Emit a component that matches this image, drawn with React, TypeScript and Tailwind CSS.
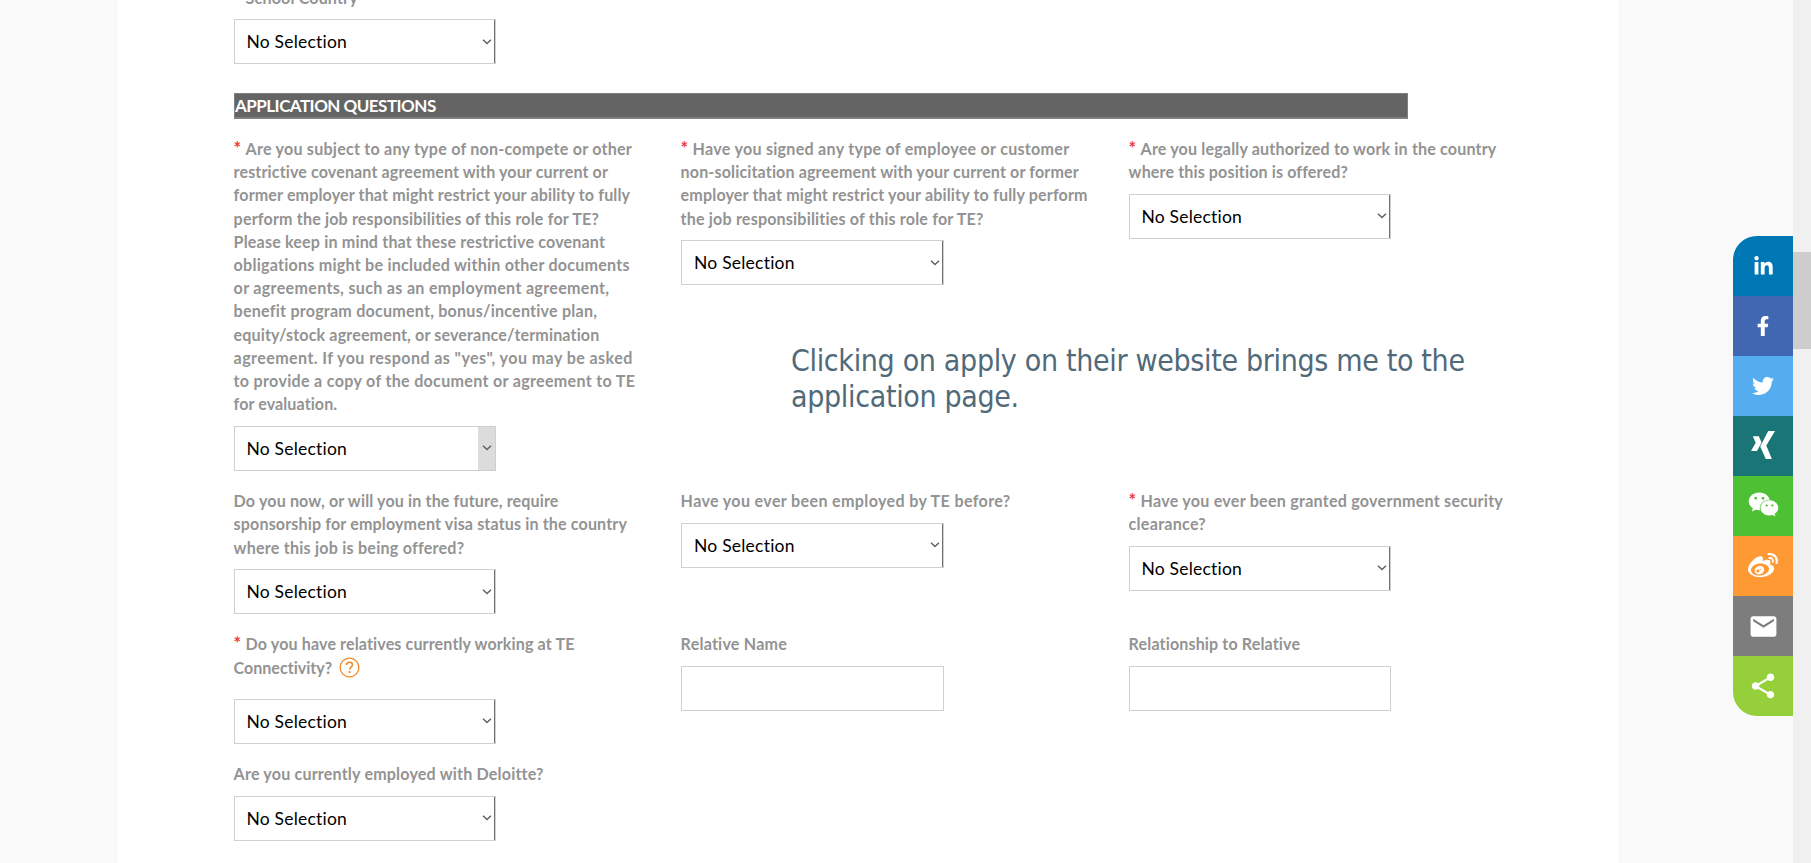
import React from 'react';
import { FaFacebookF, FaLinkedinIn, FaTwitter, FaWeibo, FaWeixin } from 'react-icons/fa';
import { MdEmail, MdShare } from 'react-icons/md';

type Line = [text: string, tracking: string];

const SANS = "font-['Lato','Open_Sans',sans-serif]";

function Label({ lines, required = false, help = false }: { lines: Line[]; required?: boolean; help?: boolean }) {
  return (
    <div className="-mb-[0.7px] -ml-[0.4px] pt-[0.7px] text-[16.08px] leading-[23.2px] font-bold text-[#939393] whitespace-nowrap">
      {lines.map(([text, tracking], i) => (
        <div key={text} className="flex h-[23.2px]">
          {required && i === 0 && <span className="w-[12px] shrink-0 text-[18px] text-[#f03a3a]">*</span>}
          <span className={tracking}>{text}</span>
          {help && i === lines.length - 1 && <HelpIcon />}
        </div>
      ))}
    </div>
  );
}

function HelpIcon() {
  return (
    <svg className="ml-[7px] mt-px size-[21px] shrink-0" viewBox="0 0 21 21" fill="none" stroke="#f08a24">
      <circle cx="10.5" cy="10.5" r="9.4" strokeWidth="1.3" />
      <path d="M7.5 8.1c0-1.8 1.2-2.9 3-2.9s3 1 3 2.6c0 2.3-2.9 2.3-2.9 4.7" strokeWidth="1.6" />
      <path d="M10.6 14.1v2" strokeWidth="2" />
    </svg>
  );
}

function SelectBox({ active = false, wide = false }: { active?: boolean; wide?: boolean }) {
  return (
    <div className={`flex h-[45px] border border-[#d0d0d0] bg-white ${wide ? 'w-[263px]' : 'w-[262px]'}`}>
      <span
        className={`flex-1 pt-px text-[17.5px] leading-[42px] tracking-[0.22px] text-black ${wide ? 'pl-[12px]' : 'pl-[11.4px]'}`}
      >
        No Selection
      </span>
      <span
        className={`flex w-[17px] items-center justify-center ${active ? 'bg-[#dcdcdc]' : 'border-r border-[#707070] pl-px'}`}
      >
        <svg className="h-[6px] w-[10px]" viewBox="0 0 10 6" fill="none" stroke="#606060" strokeWidth="1.4">
          <path d="M1 .8 5 4.6 9 .8" />
        </svg>
      </span>
    </div>
  );
}

function TextBox({ wide = false }: { wide?: boolean }) {
  return <div className={`h-[45px] border border-[#d0d0d0] bg-white ${wide ? 'w-[263px]' : 'w-[262px]'}`} />;
}

function Field({ label, children }: { label: React.ReactNode; children: React.ReactNode }) {
  return (
    <div className="flex flex-col gap-[11px]">
      {label}
      {children}
    </div>
  );
}

function Row({ children, height }: { children: React.ReactNode; height: string }) {
  return <div className={`grid grid-cols-[447px_448px_460px] items-start ${height}`}>{children}</div>;
}

function XingIcon() {
  return (
    <svg className="h-[28px] w-[24px]" viewBox="0 0 24 28" fill="#fff">
      <path d="M17.2 0H24L15.3 14.6 20.9 28H14.8L9.2 15.6Z" />
      <path d="M1.8 5.2H7.8L10.6 11.6 6 20H0L4.7 11.8Z" />
    </svg>
  );
}

const shares = [
  { name: 'LinkedIn', tile: 'bg-[#0077b5] rounded-tl-[24px] pt-px', icon: <FaLinkedinIn className="size-[21px]" /> },
  { name: 'Facebook', tile: 'bg-[#4267b2]', icon: <FaFacebookF className="size-[20px]" /> },
  { name: 'Twitter', tile: 'bg-[#55acee]', icon: <FaTwitter className="size-[22px]" /> },
  { name: 'Xing', tile: 'bg-[#1a7576] pb-[2px]', icon: <XingIcon /> },
  { name: 'WeChat', tile: 'bg-[#4ec034] pb-[4px]', icon: <FaWeixin className="size-[31px]" /> },
  { name: 'Weibo', tile: 'bg-[#ff9933]', icon: <FaWeibo className="size-[30px]" /> },
  { name: 'Email', tile: 'bg-[#7d7d7d]', icon: <MdEmail className="size-[31px]" /> },
  { name: 'Share', tile: 'bg-[#95d03a] rounded-bl-[24px]', icon: <MdShare className="size-[30px]" /> },
];

export default function App() {
  return (
    <div className={`relative flex h-[863px] w-[1811px] overflow-hidden bg-[#f9f9f9] ${SANS}`}>
      <main className="ml-[118px] w-[1500px] bg-white pl-[116px]">
        <div className="-mt-[15px] h-[34px]">
          <Label required lines={[['School Country', 'tracking-[0.15px]']]} />
        </div>
        <SelectBox />
        <h2 className="mt-[29px] h-[26px] w-[1174px] border border-b-2 border-[#808080] bg-[#646464] text-[17px] leading-[24px] font-bold tracking-[-0.52px] text-white">
          APPLICATION QUESTIONS
        </h2>

        <div className="pt-[17.4px]">
          <Row height="h-[352.2px]">
            <Field
              label={
                <Label
                  required
                  lines={[
                    ['Are you subject to any type of non-compete or other', 'tracking-[0.228px]'],
                    ['restrictive covenant agreement with your current or', 'tracking-[0.116px]'],
                    ['former employer that might restrict your ability to fully', 'tracking-[0.127px]'],
                    ['perform the job responsibilities of this role for TE?', 'tracking-[0.161px]'],
                    ['Please keep in mind that these restrictive covenant', 'tracking-[0.165px]'],
                    ['obligations might be included within other documents', 'tracking-[0.239px]'],
                    ['or agreements, such as an employment agreement,', 'tracking-[0.312px]'],
                    ['benefit program document, bonus/incentive plan,', 'tracking-[0.225px]'],
                    ['equity/stock agreement, or severance/termination', 'tracking-[0.134px]'],
                    ['agreement. If you respond as "yes", you may be asked', 'tracking-[0.406px]'],
                    ['to provide a copy of the document or agreement to TE', 'tracking-[0.307px]'],
                    ['for evaluation.', 'tracking-[0.074px]'],
                  ]}
                />
              }
            >
              <SelectBox active />
            </Field>
            <Field
              label={
                <Label
                  required
                  lines={[
                    ['Have you signed any type of employee or customer', 'tracking-[0.266px]'],
                    ['non-solicitation agreement with your current or former', 'tracking-[0.129px]'],
                    ['employer that might restrict your ability to fully perform', 'tracking-[0.15px]'],
                    ['the job responsibilities of this role for TE?', 'tracking-[0.178px]'],
                  ]}
                />
              }
            >
              <SelectBox wide />
            </Field>
            <Field
              label={
                <Label
                  required
                  lines={[
                    ['Are you legally authorized to work in the country', 'tracking-[0.155px]'],
                    ['where this position is offered?', 'tracking-[0.121px]'],
                  ]}
                />
              }
            >
              <SelectBox />
            </Field>
          </Row>

          <Row height="h-[143.2px]">
            <Field
              label={
                <Label
                  lines={[
                    ['Do you now, or will you in the future, require', 'tracking-[0.14px]'],
                    ['sponsorship for employment visa status in the country', 'tracking-[0.136px]'],
                    ['where this job is being offered?', 'tracking-[0.227px]'],
                  ]}
                />
              }
            >
              <SelectBox />
            </Field>
            <Field label={<Label lines={[['Have you ever been employed by TE before?', 'tracking-[0.345px]']]} />}>
              <SelectBox wide />
            </Field>
            <Field
              label={
                <Label
                  required
                  lines={[
                    ['Have you ever been granted government security', 'tracking-[0.248px]'],
                    ['clearance?', 'tracking-[0.258px]'],
                  ]}
                />
              }
            >
              <SelectBox />
            </Field>
          </Row>

          <Row height="h-[130px]">
            <Field
              label={
                <div className="pb-[9.6px]">
                  <Label
                    required
                    help
                    lines={[
                      ['Do you have relatives currently working at TE', 'tracking-[0.12px]'],
                      ['Connectivity?', 'tracking-[-0.02px]'],
                    ]}
                  />
                </div>
              }
            >
              <SelectBox />
            </Field>
            <Field label={<Label lines={[['Relative Name', 'tracking-[0.22px]']]} />}>
              <TextBox wide />
            </Field>
            <Field label={<Label lines={[['Relationship to Relative', 'tracking-[0.13px]']]} />}>
              <TextBox />
            </Field>
          </Row>

          <Row height="h-[80px]">
            <Field label={<Label lines={[['Are you currently employed with Deloitte?', 'tracking-[0.181px]']]} />}>
              <SelectBox />
            </Field>
          </Row>
        </div>
      </main>

      <p className="absolute top-[343px] left-[791px] text-[30px] leading-[36px] tracking-[-0.33px] whitespace-nowrap text-[#506a7a] font-['DejaVu_Sans_Condensed','DejaVu_Sans',sans-serif]">
        Clicking on apply on their website brings me to the
        <br />
        application page.
      </p>

      <nav className="absolute top-[236px] right-[18px] w-[60px] text-white">
        {shares.map((s) => (
          <a key={s.name} aria-label={s.name} className={`flex h-[60px] items-center justify-center ${s.tile}`}>
            {s.icon}
          </a>
        ))}
      </nav>

      <div className="ml-auto w-[18px] bg-[#f0f0f0] pt-[252px]">
        <div className="h-[97px] bg-[#cdcdcd]" />
      </div>
    </div>
  );
}
